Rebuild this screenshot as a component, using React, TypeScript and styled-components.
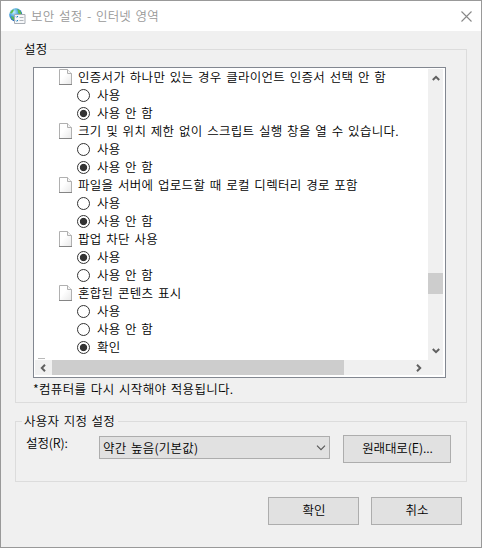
import React from 'react';
import styled, { createGlobalStyle } from 'styled-components';

const GlobalStyle = createGlobalStyle`
  * { box-sizing: border-box; }
  body {
    margin: 0;
    font-family: "Noto Sans CJK KR", sans-serif;
    font-size: 12.5px;
    font-weight: 350;
    letter-spacing: .22px;
    word-spacing: 1.5px;
    color: #000;
  }
  svg { display: block; flex: none; }
`;

const Dialog = styled.div`
  width: 482px;
  height: 548px;
  display: flex;
  flex-direction: column;
  background: #f0f0f0;
  border: 1px solid #999;
`;

const TitleBar = styled.header`
  height: 30px;
  flex: none;
  display: flex;
  align-items: center;
  padding: 0 9px 0 8px;
  background: #fff;
  color: #999;
`;

const Title = styled.span`
  flex: 1;
  margin-left: 5px;
  line-height: 18px;
`;

const Body = styled.main`
  flex: 1;
  display: flex;
  flex-direction: column;
  padding: 18px 14px 0;
`;

const Group = styled.section<{ $height: number; $gap?: number }>`
  width: 452px;
  height: ${p => p.$height}px;
  margin-bottom: ${p => p.$gap ?? 0}px;
  flex: none;
  border: 1px solid #dcdcdc;
  padding-left: 6px;
`;

const Legend = styled.h2`
  width: fit-content;
  height: 18px;
  line-height: 18px;
  margin: -10px 0 0;
  padding: 0 3px 0 2px;
  background: #f0f0f0;
  font-size: inherit;
  font-weight: inherit;
`;

const ListBox = styled.div`
  width: 413px;
  height: 311px;
  margin: 9px 0 0 11px;
  padding: 0 1px 1px 0;
  display: grid;
  grid-template-columns: 394px 16px;
  grid-template-rows: 292px 16px;
  background: #fff;
  border: 1px solid #828790;
`;

const Rows = styled.div`
  overflow: hidden;
`;

const Heading = styled.div`
  height: 18px;
  display: flex;
  align-items: center;
  gap: 6px;
  padding-left: 25px;
  line-height: 18px;
  letter-spacing: .3px;
  white-space: nowrap;
`;

const Option = styled.label`
  height: 18px;
  display: flex;
  align-items: center;
  gap: 7px;
  padding-left: 43px;
  line-height: 18px;
  white-space: nowrap;
`;

const Radio = styled.span<{ $checked: boolean }>`
  width: 13px;
  height: 13px;
  flex: none;
  border-radius: 50%;
  border: 1px solid #333;
  background: ${p => (p.$checked ? 'radial-gradient(circle, #333 3.2px, #fff 4.1px)' : '#fff')};
`;

const ClippedIcon = styled.div`
  width: 7px;
  height: 1px;
  margin: 2px 0 0 4px;
  background: #b9b9b9;
`;

const VerticalBar = styled.div`
  margin: 1px 1px 0 0;
  display: flex;
  flex-direction: column;
  align-items: center;
  padding-top: 5px;
  background: #f0f0f0;
`;

const VerticalThumb = styled.div`
  width: 15px;
  height: 21px;
  flex: none;
  margin: 191px 0 53px;
  background: #cdcdcd;
`;

const HorizontalBar = styled.div`
  grid-column: 1 / 3;
  margin: 0 1px 1px;
  display: flex;
  align-items: center;
  padding-left: 4px;
  background: #f0f0f0;
`;

const HorizontalThumb = styled.div`
  width: 292px;
  height: 15px;
  margin: 0 71px 0 5px;
  background: #cdcdcd;
`;

const Note = styled.p`
  margin: 2px 0 0 11px;
  line-height: 18px;
  letter-spacing: .3px;
`;

const Controls = styled.div`
  display: flex;
  align-items: flex-start;
  padding: 4px 0 0 4px;
`;

const FieldLabel = styled.span`
  width: 73px;
  line-height: 18px;
  letter-spacing: -.1px;
`;

const Select = styled.div`
  width: 231px;
  height: 23px;
  margin-top: 2px;
  padding: 0 3px;
  display: flex;
  align-items: center;
  justify-content: space-between;
  border: 1px solid #adadad;
  background: #e1e1e1;
`;

const Button = styled.button<{ $width: number }>`
  width: ${p => p.$width}px;
  height: 28px;
  padding: 0 0 2px 1px;
  border: 1px solid #adadad;
  background: #e1e1e1;
  color: #000;
  font: inherit;
  line-height: 18px;
  letter-spacing: -.1px;
`;

const ResetSlot = styled.div`
  display: flex;
  margin: 1px 0 0 13px;
`;

const Footer = styled.footer`
  display: flex;
  justify-content: flex-end;
  gap: 12px;
  margin-top: 15px;
  padding-right: 5px;
`;

const GlobeIcon = () => (
  <svg width="17" height="17" viewBox="0 0 17 17">
    <defs>
      <radialGradient id="globe" cx="35%" cy="30%" r="75%">
        <stop offset="0" stopColor="#c9f0fc" />
        <stop offset=".5" stopColor="#3f9ddb" />
        <stop offset="1" stopColor="#1b4fb0" />
      </radialGradient>
    </defs>
    <circle cx="6.8" cy="6.8" r="6.6" fill="url(#globe)" />
    <path d="M1 5 3 2 5 1.5 4 4 2.5 5.5ZM8 .8l3 1.6 1.6 3-1.6.8-2-1.5V3ZM2 8l2.5 1 .8 3.2L3 11Z" fill="#5fbd46" />
    <path d="M5.5 6.5h10.5v9H5.5Z" fill="#f7f8fa" stroke="#a8aeb5" />
    <path d="m7 8.5.8.8L9 8M7 12.5l.8.8L9 12" fill="none" stroke="#1980bb" />
    <path d="M10.5 9.5h4M10.5 12.5h4" stroke="#b0b5ba" />
  </svg>
);

const PageIcon = () => (
  <svg width="13" height="16" viewBox="0 0 13 16">
    <defs>
      <linearGradient id="paper" x1="0" y1="0" x2="1" y2="1">
        <stop offset=".4" stopColor="#fff" />
        <stop offset="1" stopColor="#e8e8e8" />
      </linearGradient>
    </defs>
    <path d="M.5.5h8l4 4v11H.5Z" fill="url(#paper)" stroke="#b0b0b0" />
    <path d="M8.5.5v4h4" fill="#f5f5f5" stroke="#b0b0b0" />
    <path d="M0 15.5h13" stroke="#858585" />
  </svg>
);

const CloseIcon = () => (
  <svg width="11" height="11" viewBox="0 0 11 11">
    <path d="m.5.5 10 10m0-10-10 10" stroke="#888" strokeWidth="1.1" />
  </svg>
);

const arrowPaths = {
  up: 'm.8 6 3.2-3.2L7.2 6',
  down: 'M.8 2 4 5.2 7.2 2',
  left: 'M6 .8 2.8 4 6 7.2',
  right: 'M2 .8 5.2 4 2 7.2',
};

const Arrow = ({ to }: { to: keyof typeof arrowPaths }) => (
  <svg width="8" height="8" viewBox="0 0 8 8">
    <path d={arrowPaths[to]} fill="none" stroke="#606060" strokeWidth="2" />
  </svg>
);

const SelectArrow = () => (
  <svg width="10" height="6" viewBox="0 0 10 6">
    <path d="m1 .7 4 4 4-4" fill="none" stroke="#555" strokeWidth="1.1" />
  </svg>
);

const settings = [
  { title: '인증서가 하나만 있는 경우 클라이언트 인증서 선택 안 함', options: ['사용', '사용 안 함'], selected: 1 },
  { title: '크기 및 위치 제한 없이 스크립트 실행 창을 열 수 있습니다.', options: ['사용', '사용 안 함'], selected: 1 },
  { title: '파일을 서버에 업로드할 때 로컬 디렉터리 경로 포함', options: ['사용', '사용 안 함'], selected: 1 },
  { title: '팝업 차단 사용', options: ['사용', '사용 안 함'], selected: 0 },
  { title: '혼합된 콘텐츠 표시', options: ['사용', '사용 안 함', '확인'], selected: 2 },
];

export default function App() {
  return (
    <>
      <GlobalStyle />
      <Dialog>
        <TitleBar>
          <GlobeIcon />
          <Title>보안 설정 - 인터넷 영역</Title>
          <CloseIcon />
        </TitleBar>
        <Body>
          <Group $height={354} $gap={18}>
            <Legend>설정</Legend>
            <ListBox>
              <Rows>
                {settings.map(s => (
                  <React.Fragment key={s.title}>
                    <Heading><PageIcon />{s.title}</Heading>
                    {s.options.map((o, i) => (
                      <Option key={o}><Radio $checked={i === s.selected} />{o}</Option>
                    ))}
                  </React.Fragment>
                ))}
                <ClippedIcon />
              </Rows>
              <VerticalBar>
                <Arrow to="up" />
                <VerticalThumb />
                <Arrow to="down" />
              </VerticalBar>
              <HorizontalBar>
                <Arrow to="left" />
                <HorizontalThumb />
                <Arrow to="right" />
              </HorizontalBar>
            </ListBox>
            <Note>*컴퓨터를 다시 시작해야 적용됩니다.</Note>
          </Group>
          <Group $height={61}>
            <Legend>사용자 지정 설정</Legend>
            <Controls>
              <FieldLabel>설정(R):</FieldLabel>
              <Select>약간 높음(기본값)<SelectArrow /></Select>
              <ResetSlot><Button $width={108}>원래대로(E)...</Button></ResetSlot>
            </Controls>
          </Group>
          <Footer>
            <Button $width={91}>확인</Button>
            <Button $width={91}>취소</Button>
          </Footer>
        </Body>
      </Dialog>
    </>
  );
}
